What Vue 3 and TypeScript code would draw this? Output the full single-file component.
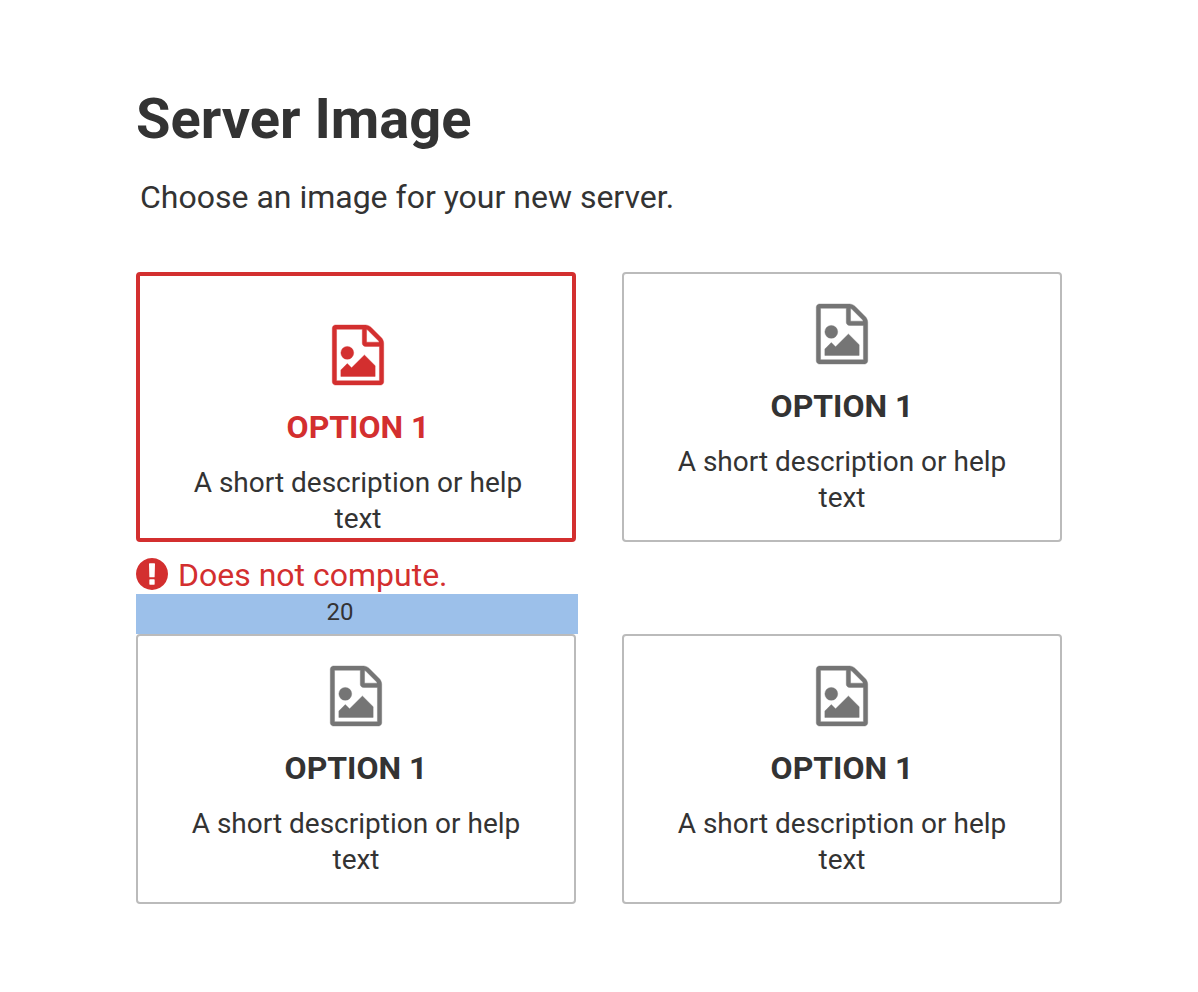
<script setup lang="ts">
import { ref } from 'vue'

interface Option {
  id: number
  title: string
  description: string
  error?: string
}

const spacing = 20

const options: Option[] = [
  { id: 1, title: 'OPTION 1', description: 'A short description or help text', error: 'Does not compute.' },
  { id: 2, title: 'OPTION 1', description: 'A short description or help text' },
  { id: 3, title: 'OPTION 1', description: 'A short description or help text' },
  { id: 4, title: 'OPTION 1', description: 'A short description or help text' },
]

const selected = ref<number | null>(null)
</script>

<template>
  <main class="page">
    <h1 class="title">Server Image</h1>
    <p class="intro">Choose an image for your new server.</p>

    <div class="grid">
      <div v-for="option in options" :key="option.id" class="cell">
        <button
          type="button"
          class="card"
          :class="{ invalid: option.error }"
          :aria-pressed="selected === option.id"
          :aria-describedby="option.error ? `error-${option.id}` : undefined"
          @click="selected = option.id"
        >
          <svg class="file-icon" viewBox="128 0 1536 1792" aria-hidden="true">
            <path
              d="M1596 380q28 28 48 76t20 88v1152q0 40-28 68t-68 28h-1344q-40 0-68-28t-28-68v-1600q0-40 28-68t68-28h896q40 0 88 20t76 48zm-444-244v376h376q-10-29-22-41l-313-313q-12-12-41-22zm384 1528v-1024h-416q-40 0-68-28t-28-68v-416h-768v1536h1280zm-128-448v320h-1024v-192l192-192 128 128 384-384zm-832-192q-80 0-136-56t-56-136 56-136 136-56 136 56 56 136-56 136-136 56z"
            />
          </svg>
          <span class="card-title">{{ option.title }}</span>
          <span class="card-text">{{ option.description }}</span>
        </button>

        <template v-if="option.error">
          <p :id="`error-${option.id}`" class="error">
            <svg class="error-icon" viewBox="128 128 1536 1536" aria-hidden="true">
              <path
                d="M896 128q209 0 385.5 103t279.5 279.5 103 385.5-103 385.5-279.5 279.5-385.5 103-385.5-103-279.5-279.5-103-385.5 103-385.5 279.5-279.5 385.5-103zm128 1247v-190q0-14-9-23.5t-22-9.5h-192q-13 0-23 10t-10 23v190q0 13 10 23t23 10h192q13 0 22-9.5t9-23.5zm-2-344l18-621q0-12-10-18-10-8-24-8h-220q-14 0-24 8-10 6-10 18l17 621q0 10 10 17.5t24 7.5h185q14 0 23.5-7.5t10.5-17.5z"
              />
            </svg>
            {{ option.error }}
          </p>
          <div class="spacer">{{ spacing }}</div>
        </template>
      </div>
    </div>
  </main>
</template>

<style>
body {
  margin: 0;
  background: #ffffff;
}
</style>

<style scoped>
.page {
  box-sizing: border-box;
  padding: 86px 136px;
  color: #333333;
  font-family: Roboto, 'Liberation Sans', sans-serif;
}

.title {
  margin: 0;
  font-size: 56px;
  line-height: 66px;
  font-weight: 700;
}

.intro {
  margin: 26px 0 56px 4px;
  font-size: 32px;
  line-height: 38px;
}

.grid {
  display: grid;
  grid-template-columns: 1fr 1fr;
  column-gap: 46px;
}

.card {
  box-sizing: border-box;
  display: flex;
  flex-direction: column;
  align-items: center;
  justify-content: flex-start;
  width: 100%;
  min-height: 270px;
  padding: 30px 48px 22px;
  border: 2px solid #bbbbbb;
  border-radius: 4px;
  background: #ffffff;
  color: inherit;
  font: inherit;
  text-align: center;
  cursor: pointer;
}

.card.invalid {
  padding: 49px 46px 0 50px;
  border: 4px solid #d32f2f;
}

.file-icon {
  width: 52px;
  height: 60px;
  overflow: visible;
  fill: #757575;
  stroke: #757575;
  stroke-width: 12;
}

.card-title {
  margin-top: 24px;
  font-size: 32px;
  line-height: 36px;
  font-weight: 700;
}

.card-text {
  margin-top: 20px;
  font-size: 28px;
  line-height: 36px;
}

.invalid .file-icon {
  fill: #d32f2f;
  stroke: #d32f2f;
}

.invalid .card-title {
  color: #d32f2f;
}

.error {
  display: flex;
  align-items: flex-start;
  gap: 10px;
  margin: 14px 0 0;
  color: #d32f2f;
  font-size: 32px;
  line-height: 38px;
}

.error-icon {
  width: 32px;
  height: 32px;
  margin-top: 2px;
  fill: #d32f2f;
}

.spacer {
  box-sizing: border-box;
  height: 40px;
  margin-right: -2px;
  padding-right: 34px;
  background: #9cc0ea;
  font-size: 24px;
  line-height: 36px;
  text-align: center;
}
</style>
